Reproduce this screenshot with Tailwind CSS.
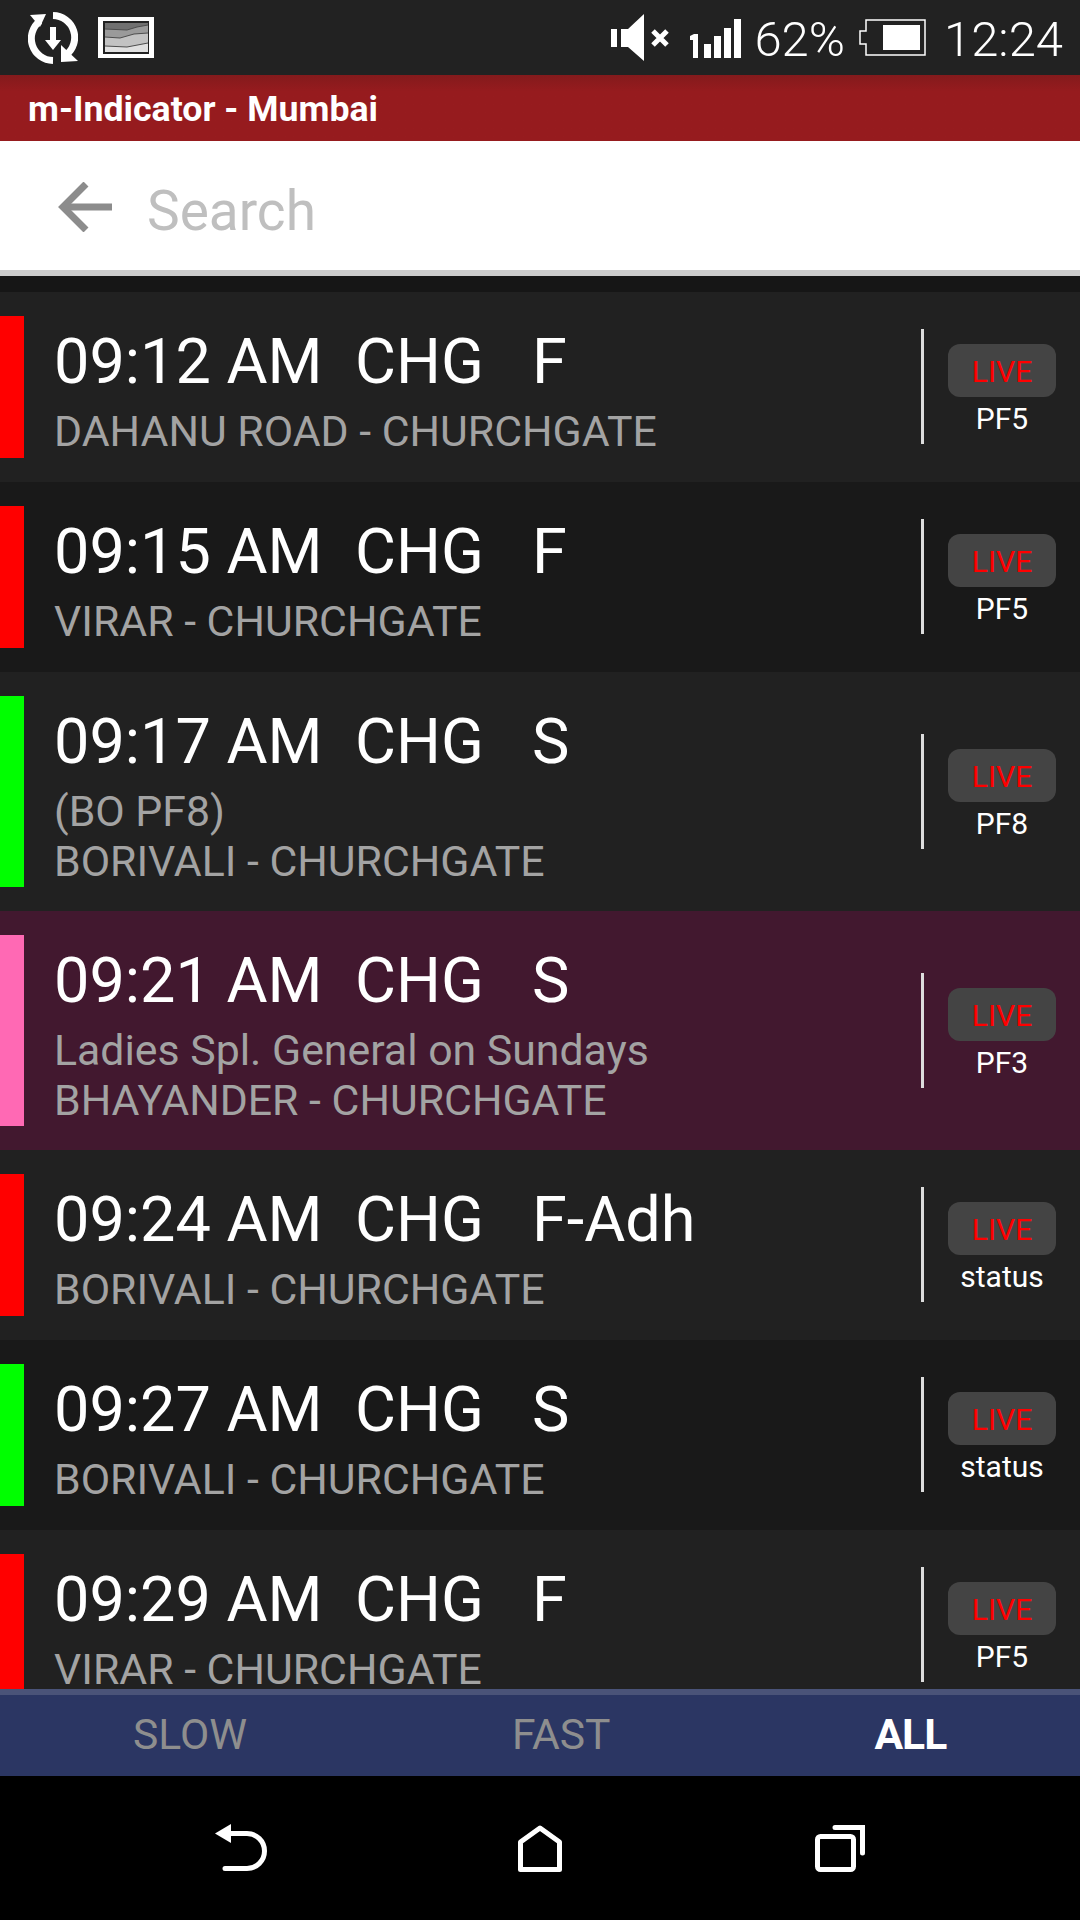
<!DOCTYPE html>
<html lang="en">
<head>
<meta charset="UTF-8">
<meta name="viewport" content="width=device-width, initial-scale=1.0">
<title>m-Indicator - Mumbai</title>
<script src="https://cdn.jsdelivr.net/npm/@tailwindcss/browser@4"></script>
</head>
<body class="bg-black font-['Roboto',sans-serif]">
<div class="w-[1080px] h-[1920px] flex flex-col overflow-hidden">

  <!-- status bar -->
  <div class="h-[75px] shrink-0 bg-[#222222] flex items-center text-white">
    <svg class="ml-[28px] w-[50px] h-[52px]" viewBox="0 0 50 52" fill="none">
      <path d="M12 9 A22 22 0 0 0 25 48.500" stroke="#fff" stroke-width="7"/>
      <path d="M25 3.500 A22 22 0 0 1 38 43" stroke="#fff" stroke-width="7"/>
      <path d="M2 3 L18 2 L12 15 Z" fill="#fff"/>
      <path d="M33 33 L50 49 L33 50 Z" fill="#fff"/>
      <path d="M22 15 H28 V28 H33 L25 38 L17 28 H22 Z" fill="#fff"/>
    </svg>
    <svg class="ml-[20px] w-[56px] h-[41px]" viewBox="0 0 56 41">
      <rect width="56" height="41" fill="#fff"/>
      <rect x="5" y="4" width="46" height="33" fill="#222"/>
      <rect x="7" y="6" width="43" height="29" fill="#e0e0e0"/>
      <path d="M7 6 H50 V26 L29 30 L7 29 Z" fill="#c2c2c2"/>
      <path d="M7 6 H50 V16 L36 17 L22 21 L7 20 Z" fill="#9a9a9a"/>
      <path d="M7 6 H50 V8 L39 10 L29 13 L7 12 Z" fill="#707070"/>
      <path d="M7 12 L29 13 L39 10 L50 8 M7 20 L22 21 L36 17 L50 16 M7 29 L29 30 L50 26" stroke="#4d4d4d" stroke-width="1" fill="none"/>
    </svg>
    <svg class="ml-auto w-[58px] h-[47px]" viewBox="0 0 58 47" fill="#fff">
      <rect x="0" y="15" width="6" height="18"/>
      <path d="M10 15 H17 L33 0 V47 L17 33 H10 Z"/>
      <path d="M42 17 L56 31 M56 17 L42 31" stroke="#fff" stroke-width="5"/>
    </svg>
    <svg class="ml-[20px] mt-[1px] w-[52px] h-[39px]" viewBox="0 0 52 39" fill="#fff">
      <path d="M1 17 L5 15 H9 V39 H4 V21 H1 Z"/>
      <rect x="15" y="25" width="7" height="14"/>
      <rect x="25" y="17" width="7" height="22"/>
      <rect x="35" y="9" width="7" height="30"/>
      <rect x="45" y="0" width="7" height="39"/>
    </svg>
    <span class="ml-[13px] mt-[3px] text-[49px] font-light leading-none">62%</span>
    <svg class="ml-[14px] w-[67px] h-[37px]" viewBox="0 0 67 37" fill="none">
      <path d="M7 1 H66 V36 H7 V25 H1 V12 H7 Z" stroke="#fff" stroke-width="1.500"/>
      <rect x="24" y="6" width="37" height="25" fill="#fff"/>
    </svg>
    <span class="ml-[18px] mr-[17px] mt-[3px] text-[49px] font-light leading-none">12:24</span>
  </div>

  <!-- app title -->
  <div class="h-[66px] shrink-0 bg-gradient-to-b from-[#841a1c] to-[#961b1e] to-[25%] flex items-center pl-[28px] pt-[4px] text-white text-[35.700px] font-bold">m-Indicator - Mumbai</div>

  <!-- search -->
  <div class="h-[135px] shrink-0 bg-white border-b-[6px] border-[#cccccc] flex items-center">
    <svg class="ml-[58px] mt-[3px] w-[54px] h-[50px]" viewBox="0 0 54 50" fill="none" stroke="#8c8c8c" stroke-width="7">
      <path d="M54 25 H5"/>
      <path d="M28 2 L5 25 L28 48"/>
    </svg>
    <span class="ml-[35px] mt-[12px] text-[55px] text-[#bfbfbf]">Search</span>
  </div>

  <!-- trains -->
  <div class="flex-1 min-h-0 overflow-hidden bg-[#161616] pt-[16px]">

    <div class="h-[190px] bg-[#212121] flex">
      <div class="w-[24px] my-6 shrink-0 bg-[#ff0000]"></div>
      <div class="flex-1 pl-[30px] pt-[33px]">
        <div class="flex text-white text-[63px] leading-[74px] mb-[7px]"><span class="w-[301px]">09:12 AM</span><span class="w-[177px]">CHG</span><span>F</span></div>
        <div class="text-[#a3a3a3] text-[42.800px] leading-[50px]">DAHANU ROAD - CHURCHGATE</div>
      </div>
      <div class="w-[3px] h-[115px] self-center mb-[1px] shrink-0 bg-[#dddddd]"></div>
      <div class="w-[156px] shrink-0 flex flex-col justify-center items-center pt-[7px] pl-[24px] pr-[24px]">
        <div class="w-[108px] h-[53px] pt-[2px] rounded-[12px] bg-[#444444] text-[#ff0000] text-[30px] flex items-center justify-center">LIVE</div>
        <div class="text-white text-[30px] leading-[36px] mt-1">PF5</div>
      </div>
    </div>

    <div class="h-[190px] bg-[#191919] flex">
      <div class="w-[24px] my-6 shrink-0 bg-[#ff0000]"></div>
      <div class="flex-1 pl-[30px] pt-[33px]">
        <div class="flex text-white text-[63px] leading-[74px] mb-[7px]"><span class="w-[301px]">09:15 AM</span><span class="w-[177px]">CHG</span><span>F</span></div>
        <div class="text-[#a3a3a3] text-[42.800px] leading-[50px]">VIRAR - CHURCHGATE</div>
      </div>
      <div class="w-[3px] h-[115px] self-center mb-[1px] shrink-0 bg-[#dddddd]"></div>
      <div class="w-[156px] shrink-0 flex flex-col justify-center items-center pt-[7px] pl-[24px] pr-[24px]">
        <div class="w-[108px] h-[53px] pt-[2px] rounded-[12px] bg-[#444444] text-[#ff0000] text-[30px] flex items-center justify-center">LIVE</div>
        <div class="text-white text-[30px] leading-[36px] mt-1">PF5</div>
      </div>
    </div>

    <div class="h-[239px] bg-[#212121] flex">
      <div class="w-[24px] my-6 shrink-0 bg-[#00ff00]"></div>
      <div class="flex-1 pl-[30px] pt-[33px]">
        <div class="flex text-white text-[63px] leading-[74px] mb-[7px]"><span class="w-[301px]">09:17 AM</span><span class="w-[177px]">CHG</span><span>S</span></div>
        <div class="text-[#a3a3a3] text-[42.800px] leading-[50px]">(BO PF8)</div>
        <div class="text-[#a3a3a3] text-[42.800px] leading-[50px]">BORIVALI - CHURCHGATE</div>
      </div>
      <div class="w-[3px] h-[115px] self-center mb-[1px] shrink-0 bg-[#dddddd]"></div>
      <div class="w-[156px] shrink-0 flex flex-col justify-center items-center pt-[7px] pl-[24px] pr-[24px]">
        <div class="w-[108px] h-[53px] pt-[2px] rounded-[12px] bg-[#444444] text-[#ff0000] text-[30px] flex items-center justify-center">LIVE</div>
        <div class="text-white text-[30px] leading-[36px] mt-1">PF8</div>
      </div>
    </div>

    <div class="h-[239px] bg-[#42182f] flex">
      <div class="w-[24px] my-6 shrink-0 bg-[#ff69b4]"></div>
      <div class="flex-1 pl-[30px] pt-[33px]">
        <div class="flex text-white text-[63px] leading-[74px] mb-[7px]"><span class="w-[301px]">09:21 AM</span><span class="w-[177px]">CHG</span><span>S</span></div>
        <div class="text-[#a3a3a3] text-[42.800px] leading-[50px]">Ladies Spl. General on Sundays</div>
        <div class="text-[#a3a3a3] text-[42.800px] leading-[50px]">BHAYANDER - CHURCHGATE</div>
      </div>
      <div class="w-[3px] h-[115px] self-center mb-[1px] shrink-0 bg-[#dddddd]"></div>
      <div class="w-[156px] shrink-0 flex flex-col justify-center items-center pt-[7px] pl-[24px] pr-[24px]">
        <div class="w-[108px] h-[53px] pt-[2px] rounded-[12px] bg-[#444444] text-[#ff0000] text-[30px] flex items-center justify-center">LIVE</div>
        <div class="text-white text-[30px] leading-[36px] mt-1">PF3</div>
      </div>
    </div>

    <div class="h-[190px] bg-[#212121] flex">
      <div class="w-[24px] my-6 shrink-0 bg-[#ff0000]"></div>
      <div class="flex-1 pl-[30px] pt-[33px]">
        <div class="flex text-white text-[63px] leading-[74px] mb-[7px]"><span class="w-[301px]">09:24 AM</span><span class="w-[177px]">CHG</span><span>F-Adh</span></div>
        <div class="text-[#a3a3a3] text-[42.800px] leading-[50px]">BORIVALI - CHURCHGATE</div>
      </div>
      <div class="w-[3px] h-[115px] self-center mb-[1px] shrink-0 bg-[#dddddd]"></div>
      <div class="w-[156px] shrink-0 flex flex-col justify-center items-center pt-[7px] pl-[24px] pr-[24px]">
        <div class="w-[108px] h-[53px] pt-[2px] rounded-[12px] bg-[#444444] text-[#ff0000] text-[30px] flex items-center justify-center">LIVE</div>
        <div class="text-white text-[30px] leading-[36px] mt-1">status</div>
      </div>
    </div>

    <div class="h-[190px] bg-[#191919] flex">
      <div class="w-[24px] my-6 shrink-0 bg-[#00ff00]"></div>
      <div class="flex-1 pl-[30px] pt-[33px]">
        <div class="flex text-white text-[63px] leading-[74px] mb-[7px]"><span class="w-[301px]">09:27 AM</span><span class="w-[177px]">CHG</span><span>S</span></div>
        <div class="text-[#a3a3a3] text-[42.800px] leading-[50px]">BORIVALI - CHURCHGATE</div>
      </div>
      <div class="w-[3px] h-[115px] self-center mb-[1px] shrink-0 bg-[#dddddd]"></div>
      <div class="w-[156px] shrink-0 flex flex-col justify-center items-center pt-[7px] pl-[24px] pr-[24px]">
        <div class="w-[108px] h-[53px] pt-[2px] rounded-[12px] bg-[#444444] text-[#ff0000] text-[30px] flex items-center justify-center">LIVE</div>
        <div class="text-white text-[30px] leading-[36px] mt-1">status</div>
      </div>
    </div>

    <div class="h-[190px] bg-[#212121] flex">
      <div class="w-[24px] my-6 shrink-0 bg-[#ff0000]"></div>
      <div class="flex-1 pl-[30px] pt-[33px]">
        <div class="flex text-white text-[63px] leading-[74px] mb-[7px]"><span class="w-[301px]">09:29 AM</span><span class="w-[177px]">CHG</span><span>F</span></div>
        <div class="text-[#a3a3a3] text-[42.800px] leading-[50px]">VIRAR - CHURCHGATE</div>
      </div>
      <div class="w-[3px] h-[115px] self-center mb-[1px] shrink-0 bg-[#dddddd]"></div>
      <div class="w-[156px] shrink-0 flex flex-col justify-center items-center pt-[7px] pl-[24px] pr-[24px]">
        <div class="w-[108px] h-[53px] pt-[2px] rounded-[12px] bg-[#444444] text-[#ff0000] text-[30px] flex items-center justify-center">LIVE</div>
        <div class="text-white text-[30px] leading-[36px] mt-1">PF5</div>
      </div>
    </div>
  </div>

  <!-- tabs -->
  <div class="h-[87px] shrink-0 bg-[#2b3663] border-t-[6px] border-[#4a5378] flex items-center pb-[2px] text-[42.600px] text-[#8e8e8e]">
    <span class="ml-[133px]">SLOW</span>
    <span class="ml-[265px]">FAST</span>
    <span class="ml-[264px] font-bold tracking-[-1px] text-white">ALL</span>
  </div>

  <!-- nav bar -->
  <div class="h-[144px] shrink-0 bg-black flex items-center">
    <svg class="ml-[215px] w-[52px] h-[48px]" viewBox="0 0 52 48" fill="none" stroke="#fff" stroke-width="5" stroke-linecap="round">
      <path d="M14 9.500 H32 A17.500 17.500 0 0 1 32 44.500 H10"/>
      <path d="M0 9.500 L16 0 V19 Z" fill="#fff" stroke="none"/>
    </svg>
    <svg class="ml-[251px] w-[44px] h-[47px]" viewBox="0 0 44 47" fill="none" stroke="#fff" stroke-width="5" stroke-linejoin="round">
      <path d="M2.500 17 L22 3 L41.500 17 V44.500 H2.500 Z"/>
    </svg>
    <svg class="ml-[253px] w-[50px] h-[47px]" viewBox="0 0 50 47" fill="none" stroke="#fff" stroke-width="5" stroke-linecap="round">
      <rect x="2.500" y="11.500" width="36" height="33" rx="3"/>
      <path d="M20 2.500 H47.500 V28"/>
    </svg>
  </div>
</div>
</body>
</html>
